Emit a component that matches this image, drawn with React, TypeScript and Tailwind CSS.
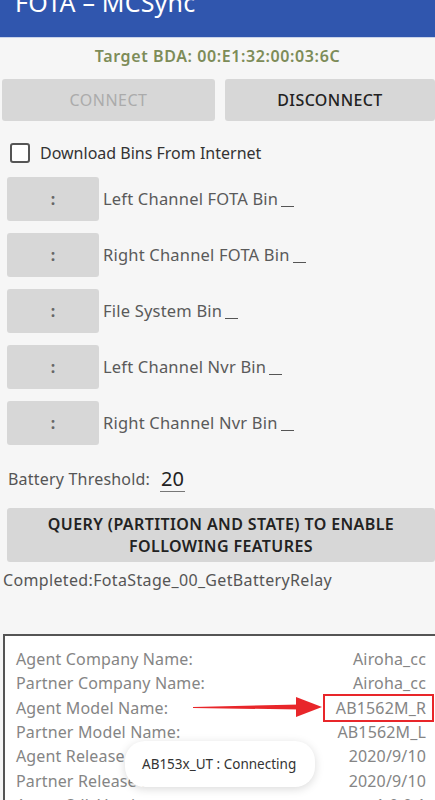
import React from "react";

const bins = [
  "Left Channel FOTA Bin",
  "Right Channel FOTA Bin",
  "File System Bin",
  "Left Channel Nvr Bin",
  "Right Channel Nvr Bin",
];

const info: [string, string][] = [
  ["Agent Company Name:", "Airoha_cc"],
  ["Partner Company Name:", "Airoha_cc"],
  ["Agent Model Name:", "AB1562M_R"],
  ["Partner Model Name:", "AB1562M_L"],
  ["Agent Release Date:", "2020/9/10"],
  ["Partner Release Date:", "2020/9/10"],
  ["Agent Sdk Version:", "v1.0.0.1"],
];

export default function App() {
  return (
    <div
      className="relative w-[435px] h-[800px] overflow-hidden bg-[#f6f6f6]"
      style={{ fontFamily: '"Noto Sans", "Open Sans", Arial, sans-serif' }}
    >
      {/* Header */}
      <div className="h-[38px] bg-[#3056ae] overflow-hidden border-b border-[#c9d3ea]">
        <div className="pl-[15px] mt-[-13px] text-[25px] leading-[30px] text-white tracking-[0.2px]">
          FOTA – MCSync
        </div>
      </div>

      {/* Target BDA */}
      <div className="h-[34px] pt-[1px] flex items-center justify-center text-[16px] font-semibold tracking-[0.6px] text-[#7d8c58]">
        Target BDA: 00:E1:32:00:03:6C
      </div>

      {/* Connect buttons */}
      <div className="mt-[7px] flex gap-[10px] pl-[2px]">
        <div className="w-[213px] h-[42px] rounded-[3px] bg-[#d7d7d7] flex items-center justify-center text-[16px] tracking-[0.5px] text-[#ababab]">
          CONNECT
        </div>
        <div className="w-[210px] h-[42px] rounded-[3px] bg-[#d7d7d7] flex items-center justify-center text-[16px] tracking-[0.4px] font-medium text-[#222]">
          DISCONNECT
        </div>
      </div>

      {/* Checkbox */}
      <div className="pt-[20px] pl-[10px] flex items-center gap-[10px]">
        <div className="w-[20px] h-[20px] rounded-[3px] border-2 border-[#555] bg-white" />
        <span className="text-[16px] text-[#333]">Download Bins From Internet</span>
      </div>

      {/* Bin rows */}
      <div className="mt-[12px] flex flex-col gap-[12px]">
        {bins.map((b) => (
          <div key={b} className="flex items-center h-[44px]">
            <div className="ml-[7px] w-[92px] h-[44px] rounded-[3px] bg-[#d7d7d7] flex items-center justify-center text-[16px] font-bold text-[#666]">
              :
            </div>
            <span className="ml-[4px] text-[16.5px] tracking-[0.2px] text-[#5a5a5a]">{b}</span>
            <span className="ml-[3px] mt-[14px] w-[13px] h-[1px] bg-[#555]" />
          </div>
        ))}
      </div>

      {/* Battery threshold */}
      <div className="mt-[22px] h-[24px] pl-[8px] flex items-center">
        <span className="text-[16px] tracking-[0.2px] text-[#555]">Battery Threshold:</span>
        <span className="ml-[10px] text-[20px] text-[#222] border-b border-[#777] leading-[24px] px-[1px]">
          20
        </span>
      </div>

      {/* Query button */}
      <div className="mt-[17px] ml-[7px] h-[54px] rounded-[3px] bg-[#d7d7d7] flex items-center justify-center text-center text-[16px] font-semibold tracking-[0.4px] leading-[22px] text-[#222]">
        QUERY (PARTITION AND STATE) TO ENABLE
        <br />
        FOLLOWING FEATURES
      </div>

      {/* Status */}
      <div className="h-[36px] pl-[3px] flex items-center text-[16px] tracking-[0.35px] text-[#555]">
        Completed:FotaStage_00_GetBatteryRelay
      </div>

      {/* Info box */}
      <div className="relative mt-[36px] ml-[3px] border-l-2 border-t-2 border-[#555] bg-white pt-[11px] pr-[9px] pl-[11px]">
        {info.map(([k, v]) => (
          <div key={k} className="h-[24.3px] flex items-center justify-between text-[16px] tracking-[0.15px] text-[#858585]">
            <span>{k}</span>
            <span>{v}</span>
          </div>
        ))}
        {/* red annotation box */}
        <div className="absolute left-[318px] top-[58px] w-[111px] h-[28px] border-2 border-[#e8262a]" />
      </div>

      {/* red arrow */}
      <svg className="absolute left-[190px] top-[695px]" width="135" height="25" viewBox="0 0 135 25">
        <polygon points="3,12 110,9.5 110,14.5 3,13" fill="#e8262a" />
        <polygon points="106,2 132,12 106,22" fill="#e8262a" />
      </svg>

      {/* toast */}
      <div className="absolute left-[125px] top-[741px] w-[190px] h-[46px] rounded-[20px] bg-white shadow-[0_2px_10px_rgba(0,0,0,0.15)] flex items-center pl-[17px] text-[13.5px] text-[#333]">
        AB153x_UT : Connecting
      </div>
    </div>
  );
}
